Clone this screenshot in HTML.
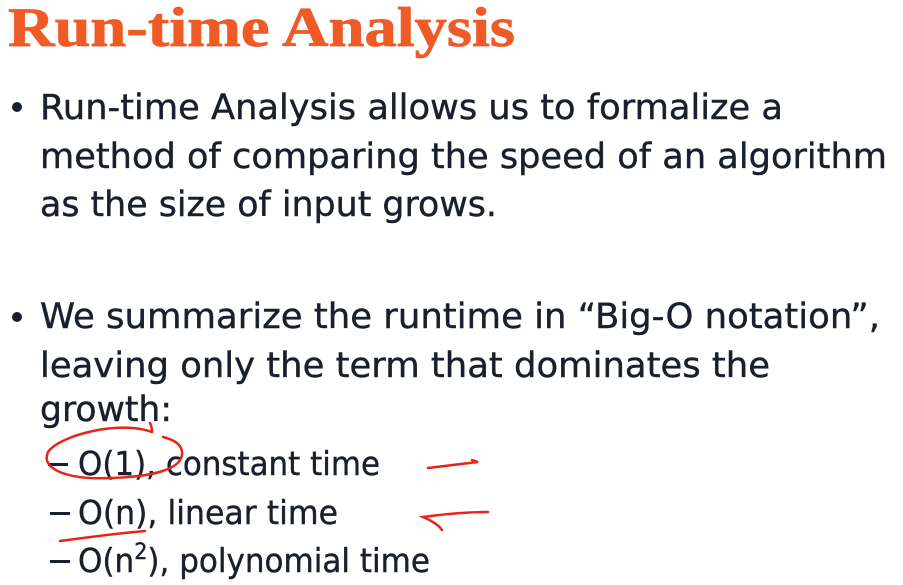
<!DOCTYPE html>
<html><head><meta charset="utf-8"><style>
html,body{margin:0;padding:0;background:#fff;width:903px;height:585px;overflow:hidden}
svg{display:block}
.t{font-family:"DejaVu Sans","Liberation Sans",sans-serif;font-size:35px;fill:#1a1f2e;stroke:#1a1f2e;stroke-width:0.4}
.s{font-family:"DejaVu Sans","Liberation Sans",sans-serif;font-size:33px;fill:#1a1f2e;stroke:#1a1f2e;stroke-width:0.4}
</style></head><body>
<svg width="903" height="585" viewBox="0 0 903 585">
<text x="8" y="46" font-family="Liberation Serif,serif" font-weight="bold" font-size="56" fill="#ef5a26" stroke="#ef5a26" stroke-width="0.8" textLength="507" lengthAdjust="spacingAndGlyphs">Run-time Analysis</text>
<circle cx="17" cy="107" r="5" fill="#1a1f2e"/>
<circle cx="17" cy="317" r="5" fill="#1a1f2e"/>
<text class="t" x="40" y="119" textLength="743" lengthAdjust="spacingAndGlyphs">Run-time Analysis allows us to formalize a</text>
<text class="t" x="40" y="168" textLength="847" lengthAdjust="spacingAndGlyphs">method of comparing the speed of an algorithm</text>
<text class="t" x="40" y="216" textLength="457" lengthAdjust="spacingAndGlyphs">as the size of input grows.</text>
<text class="t" x="40" y="328" textLength="840" lengthAdjust="spacingAndGlyphs">We summarize the runtime in “Big-O notation”,</text>
<text class="t" x="40" y="377" textLength="730" lengthAdjust="spacingAndGlyphs">leaving only the term that dominates the</text>
<text class="t" x="40" y="421" textLength="132" lengthAdjust="spacingAndGlyphs">growth:</text>
<rect x="48" y="463" width="20" height="3" fill="#1a1f2e"/>
<rect x="50" y="512" width="20" height="3" fill="#1a1f2e"/>
<rect x="50" y="560" width="20" height="3" fill="#1a1f2e"/>
<text class="s" x="78" y="475" textLength="302" lengthAdjust="spacingAndGlyphs">O(1), constant time</text>
<text class="s" x="78" y="524" textLength="260" lengthAdjust="spacingAndGlyphs">O(n), linear time</text>
<text class="s" x="78" y="572" textLength="352" lengthAdjust="spacingAndGlyphs">O(n<tspan font-size="22" dy="-13">2</tspan><tspan dy="13">), polynomial time</tspan></text>
<g fill="none" stroke="#e8231a" stroke-width="2.5" stroke-linecap="round">
<path d="M152 432 C120 420 60 435 48 452 C40 470 70 480 110 478 C150 477 180 470 182 455 C183 445 175 440 163 437"/>
<path d="M152 432 C152 428 151 425 150 423"/>
<path d="M428 468 C445 466 460 464 478 462 L472 460"/>
<path d="M488 512 C465 512 445 514 423 517 C430 520 438 524 442 530"/>
<path d="M60 541 C90 537 120 533 145 531"/>
</g>
</svg>
</body></html>
